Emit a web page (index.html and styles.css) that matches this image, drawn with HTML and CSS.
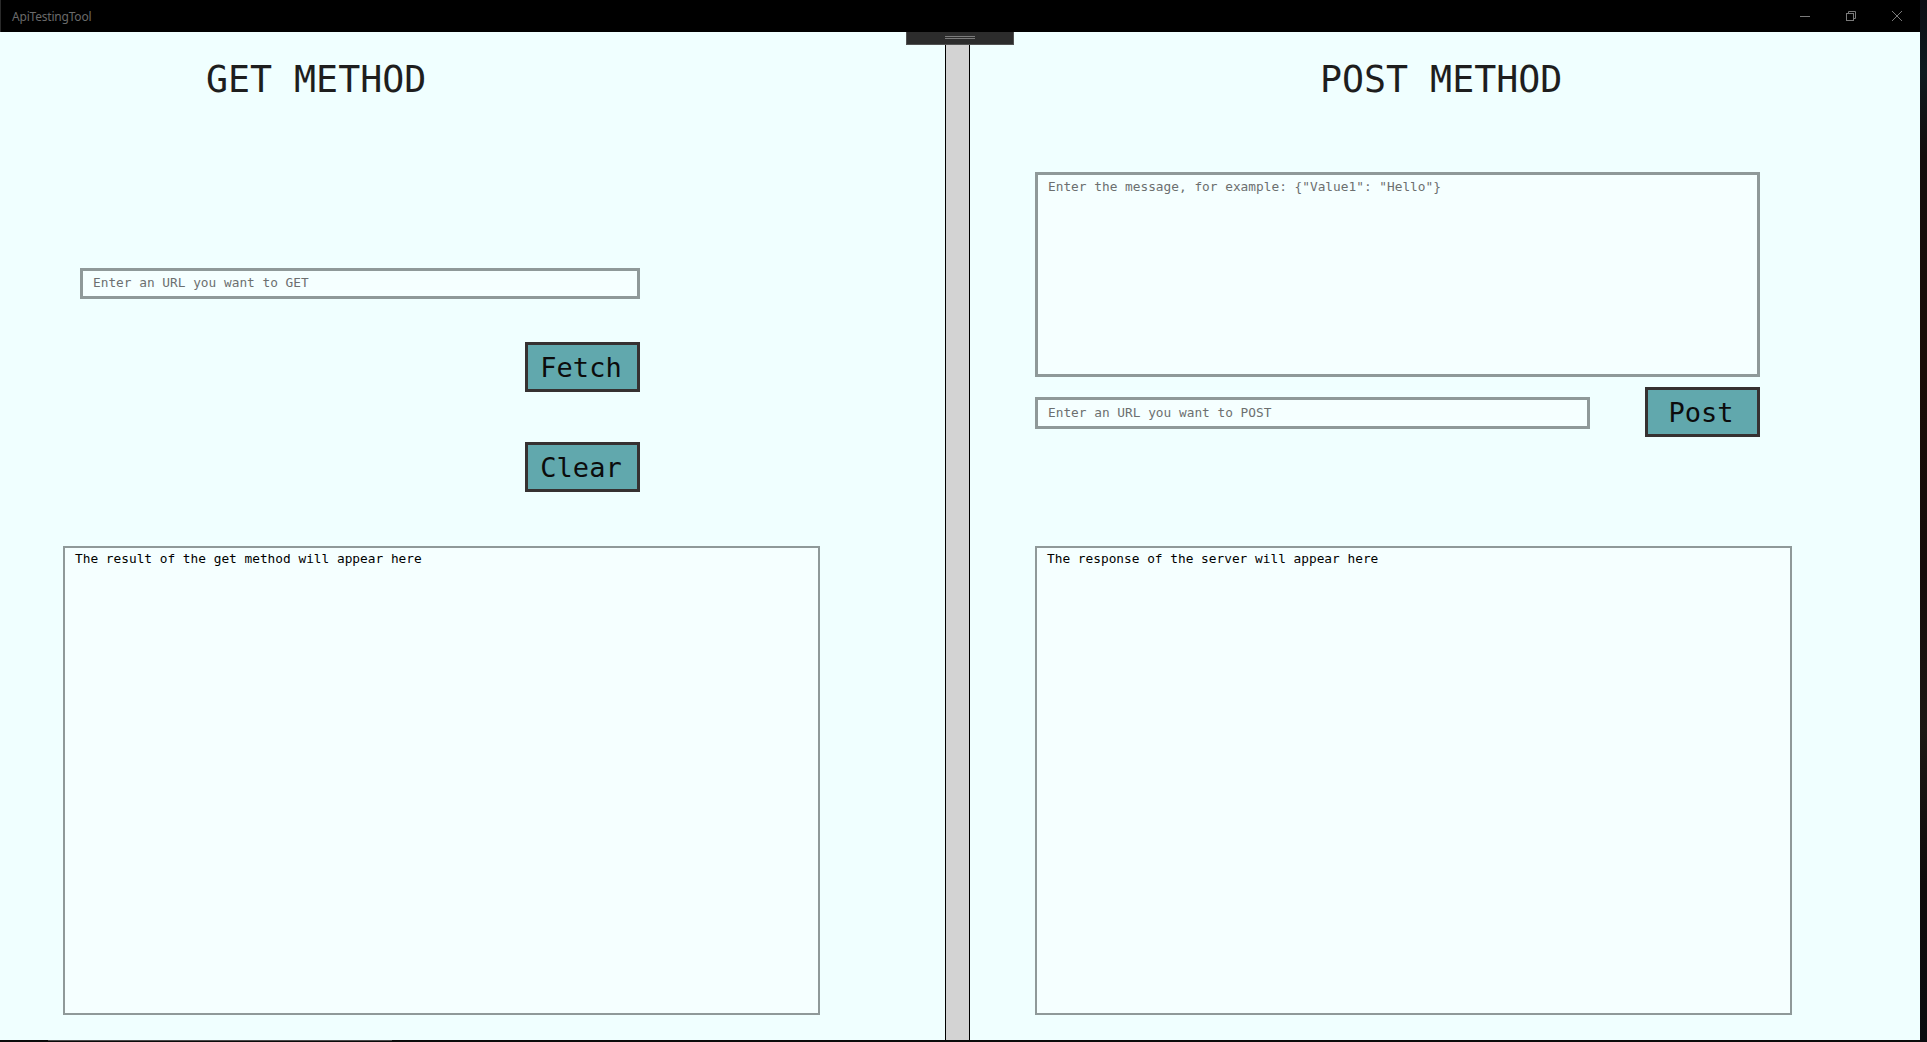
FILE: index.html
```html
<!DOCTYPE html>
<html>
<head>
<meta charset="utf-8">
<title>ApiTestingTool</title>
<link rel="stylesheet" href="styles.css">
</head>
<body>
<div class="screen">
  <div class="window">
    <div class="titlebar">
      <span class="app-title">ApiTestingTool</span>
      <div class="controls">
        <svg class="ctl" width="46" height="32" viewBox="0 0 46 32"><line x1="18" y1="16.5" x2="28" y2="16.5" stroke="#7a7a7a" stroke-width="1"/></svg>
        <svg class="ctl" width="46" height="32" viewBox="0 0 46 32"><rect x="18.5" y="13.5" width="7" height="7" fill="none" stroke="#7a7a7a"/><path d="M20.5 13.5 V11.5 H27.5 V18.5 H25.5" fill="none" stroke="#7a7a7a"/></svg>
        <svg class="ctl" width="46" height="32" viewBox="0 0 46 32"><path d="M18 11 L28 21 M28 11 L18 21" stroke="#7a7a7a" stroke-width="1"/></svg>
      </div>
    </div>
    <div class="content">
      <div class="handle"><span class="grip"></span><span class="grip"></span></div>
      <section class="panel panel-get">
        <h1 class="heading heading-get">GET METHOD</h1>
        <input class="url-input get-url" type="text" placeholder="Enter an URL you want to GET">
        <button class="action btn-fetch">Fetch</button>
        <button class="action btn-clear">Clear</button>
        <div class="output out-get">The result of the get method will appear here</div>
      </section>
      <div class="splitter"></div>
      <section class="panel panel-post">
        <h1 class="heading heading-post">POST METHOD</h1>
        <textarea class="message" placeholder='Enter the message, for example: {"Value1": "Hello"}'></textarea>
        <div class="post-row">
          <input class="url-input post-url" type="text" placeholder="Enter an URL you want to POST">
          <button class="action btn-post">Post</button>
        </div>
        <div class="output out-post">The response of the server will appear here</div>
      </section>
    </div>
    <div class="bottombar"><span class="bottom-seg"></span></div>
  </div>
  <div class="desktop-strip"></div>
</div>
</body>
</html>
```
FILE: styles.css
```css
html, body {
  margin: 0;
  padding: 0;
  width: 1927px;
  height: 1042px;
  overflow: hidden;
  background: #000;
}

.screen {
  display: flex;
  width: 1927px;
  height: 1042px;
}

.window {
  width: 1920px;
  height: 1042px;
  display: flex;
  flex-direction: column;
}

.desktop-strip {
  width: 7px;
  height: 1042px;
  background: linear-gradient(to bottom, #0b0e14 0%, #0e1a1f 7%, #140d0c 15%, #1a0d07 35%, #150c0a 55%, #1c1814 70%, #0f0b0b 85%, #0a0c0f 100%);
}

.titlebar {
  height: 32px;
  background: #000;
  border-left: 1px solid #2a2a2a;
  box-sizing: border-box;
  display: flex;
  align-items: center;
  justify-content: space-between;
}

.app-title {
  font-family: "Noto Sans", "Open Sans", sans-serif;
  font-size: 12px;
  color: #6a6a6a;
  padding-left: 11px;
  letter-spacing: -0.2px;
}

.controls {
  display: flex;
  height: 32px;
}

.ctl {
  display: block;
}

.content {
  position: relative;
  flex: 1;
  display: flex;
  background: #f0ffff;
}

.handle {
  position: absolute;
  left: 906px;
  top: 0;
  width: 108px;
  height: 13px;
  box-sizing: border-box;
  background: #2c2c2c;
  border: 1px solid #515151;
  border-top: none;
  display: flex;
  flex-direction: column;
  align-items: center;
  padding-top: 4px;
  gap: 1px;
}

.grip {
  display: block;
  width: 30px;
  height: 1px;
  background: #7c7c7c;
}

.panel {
  display: flex;
  flex-direction: column;
  align-items: flex-start;
}

.panel-get {
  width: 945px;
}

.panel-post {
  width: 950px;
}

.splitter {
  width: 25px;
  box-sizing: border-box;
  background: #d3d3d3;
  border-left: 1px solid #000;
  border-right: 1px solid #000;
}

.heading {
  margin: 26px 0 0 0;
  font-family: "DejaVu Sans Mono", monospace;
  font-weight: normal;
  font-size: 36.6px;
  line-height: 43px;
  color: #1e1e1e;
  letter-spacing: 0;
}

.heading-get {
  padding-left: 206px;
}

.heading-post {
  padding-left: 350px;
}

.url-input,
.message {
  box-sizing: border-box;
  background: #f5ffff;
  border: 3px solid #8f9999;
  font-family: "DejaVu Sans Mono", monospace;
  font-size: 12.8px;
  color: #000;
  outline: none;
  margin: 0;
}

.url-input {
  height: 31px;
  padding: 0 10px 2px 10px;
}

.url-input::placeholder,
.message::placeholder {
  color: #6c6f6f;
  opacity: 1;
}

.get-url {
  margin-top: 167px;
  margin-left: 80px;
  width: 560px;
}

.action {
  box-sizing: border-box;
  width: 115px;
  height: 50px;
  background: #61a8ad;
  border: 3px solid #363131;
  font-family: "DejaVu Sans Mono", monospace;
  font-size: 27px;
  color: #0c0c0c;
  padding: 0 3px 0 0;
  margin: 0;
}

.btn-fetch {
  margin-top: 43px;
  margin-left: 525px;
}

.btn-clear {
  margin-top: 50px;
  margin-left: 525px;
}

.output {
  box-sizing: border-box;
  height: 469px;
  background: #f5ffff;
  border: 2px solid #8f9999;
  padding: 3px 10px;
  font-family: "DejaVu Sans Mono", monospace;
  font-size: 12.8px;
  color: #000;
}

.out-get {
  margin-top: 54px;
  margin-left: 63px;
  width: 757px;
}

.message {
  margin-top: 71px;
  margin-left: 65px;
  width: 725px;
  height: 205px;
  padding: 4px 10px;
  resize: none;
  display: block;
}

.post-row {
  display: flex;
  align-items: flex-start;
  margin-top: 10px;
  margin-left: 65px;
}

.post-url {
  margin-top: 10px;
  width: 555px;
  height: 32px;
}

.btn-post {
  margin-left: 55px;
}

.out-post {
  margin-top: 109px;
  margin-left: 65px;
  width: 757px;
}

.bottombar {
  height: 2px;
  background: #0a0a0a;
  position: relative;
}

.bottom-seg {
  position: absolute;
  left: 48px;
  top: 0;
  width: 344px;
  height: 1px;
  background: #4a4a4a;
}
```
